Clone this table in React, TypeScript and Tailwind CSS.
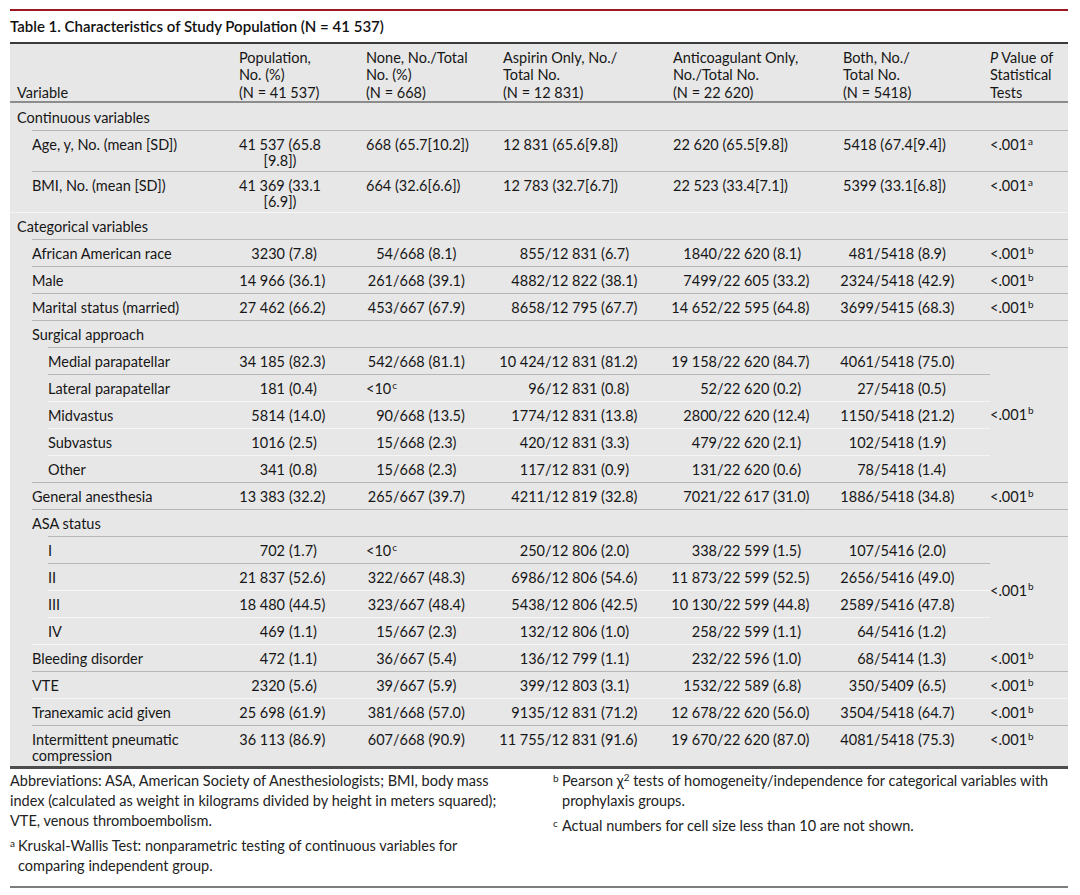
import React from 'react';

type Row = {
  label: string[];
  level: 0 | 1 | 2;
  line: 'n' | 'g' | 'w';
  vals?: string[];
  cont?: boolean;
  tall?: boolean;
  p?: 'a' | 'b' | 'skip' | 'span5' | 'span4';
};

const thin = (s: string) => s.replace(/(\d) (\d)/g, '$1\u00a0$2');

const rows: Row[] = [
  { label: ['Continuous variables'], level: 0, line: 'n' },
  { label: ['Age, y, No. (mean [SD])'], level: 1, line: 'g', tall: true, cont: true, p: 'a',
    vals: ['41 537 (65.8|[9.8])', '668 (65.7[10.2])', '12 831 (65.6[9.8])', '22 620 (65.5[9.8])', '5418 (67.4[9.4])'] },
  { label: ['BMI, No. (mean [SD])'], level: 1, line: 'g', tall: true, cont: true, p: 'a',
    vals: ['41 369 (33.1|[6.9])', '664 (32.6[6.6])', '12 783 (32.7[6.7])', '22 523 (33.4[7.1])', '5399 (33.1[6.8])'] },
  { label: ['Categorical variables'], level: 0, line: 'w' },
  { label: ['African American race'], level: 1, line: 'g', p: 'b',
    vals: ['3230 (7.8)', '54/668 (8.1)', '855/12 831 (6.7)', '1840/22 620 (8.1)', '481/5418 (8.9)'] },
  { label: ['Male'], level: 1, line: 'g', p: 'b',
    vals: ['14 966 (36.1)', '261/668 (39.1)', '4882/12 822 (38.1)', '7499/22 605 (33.2)', '2324/5418 (42.9)'] },
  { label: ['Marital status (married)'], level: 1, line: 'g', p: 'b',
    vals: ['27 462 (66.2)', '453/667 (67.9)', '8658/12 795 (67.7)', '14 652/22 595 (64.8)', '3699/5415 (68.3)'] },
  { label: ['Surgical approach'], level: 1, line: 'g' },
  { label: ['Medial parapatellar'], level: 2, line: 'g', p: 'span5',
    vals: ['34 185 (82.3)', '542/668 (81.1)', '10 424/12 831 (81.2)', '19 158/22 620 (84.7)', '4061/5418 (75.0)'] },
  { label: ['Lateral parapatellar'], level: 2, line: 'g', p: 'skip',
    vals: ['181 (0.4)', '<10', '96/12 831 (0.8)', '52/22 620 (0.2)', '27/5418 (0.5)'] },
  { label: ['Midvastus'], level: 2, line: 'w', p: 'skip',
    vals: ['5814 (14.0)', '90/668 (13.5)', '1774/12 831 (13.8)', '2800/22 620 (12.4)', '1150/5418 (21.2)'] },
  { label: ['Subvastus'], level: 2, line: 'w', p: 'skip',
    vals: ['1016 (2.5)', '15/668 (2.3)', '420/12 831 (3.3)', '479/22 620 (2.1)', '102/5418 (1.9)'] },
  { label: ['Other'], level: 2, line: 'w', p: 'skip',
    vals: ['341 (0.8)', '15/668 (2.3)', '117/12 831 (0.9)', '131/22 620 (0.6)', '78/5418 (1.4)'] },
  { label: ['General anesthesia'], level: 1, line: 'g', p: 'b',
    vals: ['13 383 (32.2)', '265/667 (39.7)', '4211/12 819 (32.8)', '7021/22 617 (31.0)', '1886/5418 (34.8)'] },
  { label: ['ASA status'], level: 1, line: 'g' },
  { label: ['I'], level: 2, line: 'g', p: 'span4',
    vals: ['702 (1.7)', '<10', '250/12 806 (2.0)', '338/22 599 (1.5)', '107/5416 (2.0)'] },
  { label: ['II'], level: 2, line: 'g', p: 'skip',
    vals: ['21 837 (52.6)', '322/667 (48.3)', '6986/12 806 (54.6)', '11 873/22 599 (52.5)', '2656/5416 (49.0)'] },
  { label: ['III'], level: 2, line: 'w', p: 'skip',
    vals: ['18 480 (44.5)', '323/667 (48.4)', '5438/12 806 (42.5)', '10 130/22 599 (44.8)', '2589/5416 (47.8)'] },
  { label: ['IV'], level: 2, line: 'w', p: 'skip',
    vals: ['469 (1.1)', '15/667 (2.3)', '132/12 806 (1.0)', '258/22 599 (1.1)', '64/5416 (1.2)'] },
  { label: ['Bleeding disorder'], level: 1, line: 'w', p: 'b',
    vals: ['472 (1.1)', '36/667 (5.4)', '136/12 799 (1.1)', '232/22 596 (1.0)', '68/5414 (1.3)'] },
  { label: ['VTE'], level: 1, line: 'g', p: 'b',
    vals: ['2320 (5.6)', '39/667 (5.9)', '399/12 803 (3.1)', '1532/22 589 (6.8)', '350/5409 (6.5)'] },
  { label: ['Tranexamic acid given'], level: 1, line: 'w', p: 'b',
    vals: ['25 698 (61.9)', '381/668 (57.0)', '9135/12 831 (71.2)', '12 678/22 620 (56.0)', '3504/5418 (64.7)'] },
  { label: ['Intermittent pneumatic', 'compression'], level: 1, line: 'g', tall: true, p: 'b',
    vals: ['36 113 (86.9)', '607/668 (90.9)', '11 755/12 831 (91.6)', '19 670/22 620 (87.0)', '4081/5418 (75.3)'] },
];

const lineCls = { n: 'border-transparent', g: 'border-[#b7b7b7]', w: 'border-[#f5f5f5]' };
const indentCls = ['pl-[7px]', 'ml-[22px]', 'ml-[38px]'];
const leftW = ['w-[46px]', 'w-[27px]', 'w-[42px]', 'w-[44px]', 'w-[31px]'];

const Sup = ({ c }: { c: string }) => <sup className="text-[10px] ml-[1px]">{c}</sup>;

const Value = ({ v, col, cont }: { v: string; col: number; cont?: boolean }) => {
  if (cont) {
    if (v.includes('|')) {
      const [a, b] = v.split('|');
      return <span className="inline-block text-center">{thin(a)}<br />{b}</span>;
    }
    return <span>{thin(v)}</span>;
  }
  if (v === '<10') return <span>&lt;10<Sup c="c" /></span>;
  let left: string, right: string;
  if (col === 0) {
    const i = v.indexOf(' (');
    left = v.slice(0, i);
    right = v.slice(i + 1);
  } else {
    const i = v.indexOf('/');
    left = v.slice(0, i);
    right = v.slice(i);
  }
  return (
    <span className="flex">
      <span className={`flex justify-end shrink-0 ${leftW[col]}`}>{thin(left)}</span>
      <span className={col === 0 ? 'ml-[4px]' : ''}>{thin(right)}</span>
    </span>
  );
};

const headers = [
  ['Variable'],
  ['Population,', 'No. (%)', '(N = 41 537)'],
  ['None, No./Total', 'No. (%)', '(N = 668)'],
  ['Aspirin Only, No./', 'Total No.', '(N = 12 831)'],
  ['Anticoagulant Only,', 'No./Total No.', '(N = 22 620)'],
  ['Both, No./', 'Total No.', '(N = 5418)'],
];

export default function App() {
  return (
    <div className="min-h-[895px] bg-white text-[#161616] font-['Lato',sans-serif]">
      <div className="ml-[10px] w-[1058px] pt-[9px]">
        <div className="h-[2px] bg-[#9b1722]" />
        <h1 className="pt-[5px] pb-[6px] text-[15px] leading-5 font-semibold text-[#111]">
          Table 1. Characteristics of Study Population (N = 41{'\u00a0'}537)
        </h1>

        <div className="grid grid-cols-[229px_127px_137px_170px_170px_147px_78px] bg-[#e7e7e7] border-t-2 border-b-[3px] border-t-[#3a3a3a] border-b-[#4d4d4d] text-[14.5px]">
          {headers.map((h, i) => (
            <div key={i} className={`h-[59px] flex flex-col justify-end border-b-2 border-[#8c8c8c] leading-[17.5px] ${i === 0 ? 'pl-[7px]' : ''}`}>
              {h.map((t, j) => <div key={j}>{thin(t)}</div>)}
            </div>
          ))}
          <div className="h-[59px] flex flex-col justify-end border-b-2 border-[#8c8c8c] leading-[17.5px]">
            <div><i>P</i> Value of</div>
            <div>Statistical</div>
            <div>Tests</div>
          </div>

          {rows.map((r, ri) => {
            const base = `${r.tall ? 'h-[41px]' : 'h-[27px]'} pt-[6px] leading-4 whitespace-nowrap border-t ${lineCls[r.line]}`;
            return (
              <React.Fragment key={ri}>
                <div className={`${base} ${indentCls[r.level]}`}>
                  {r.label.map((l, li) => <div key={li}>{l}</div>)}
                </div>
                {[0, 1, 2, 3, 4].map((c) => (
                  <div key={c} className={base}>
                    {r.vals && <Value v={r.vals[c]} col={c} cont={r.cont} />}
                  </div>
                ))}
                {r.p === 'a' || r.p === 'b' ? (
                  <div className={base}>&lt;.001<Sup c={r.p} /></div>
                ) : r.p === 'span5' ? (
                  <div className={`row-span-5 flex items-center border-t ${lineCls[r.line]}`}>&lt;.001<Sup c="b" /></div>
                ) : r.p === 'span4' ? (
                  <div className={`row-span-4 flex items-center border-t ${lineCls[r.line]}`}>&lt;.001<Sup c="b" /></div>
                ) : r.p === 'skip' ? null : (
                  <div className={base} />
                )}
              </React.Fragment>
            );
          })}
        </div>

        <div className="flex pt-[2px] pb-[10px] border-b-2 border-[#7d7d7d] text-[14.5px] leading-5 text-[#222]">
          <div className="w-[543px] shrink-0">
            <p>
              Abbreviations: ASA, American Society of Anesthesiologists; BMI, body mass<br />
              index (calculated as weight in kilograms divided by height in meters squared);<br />
              VTE, venous thromboembolism.
            </p>
            <div className="flex mt-[5px]">
              <span className="w-[8px] shrink-0 text-[10px] leading-[14px]">a</span>
              <p>
                Kruskal-Wallis Test: nonparametric testing of continuous variables for<br />
                comparing independent group.
              </p>
            </div>
          </div>
          <div>
            <div className="flex">
              <span className="w-[9px] shrink-0 text-[10px] leading-[14px]">b</span>
              <p>
                Pearson χ<sup className="text-[10px]">2</sup> tests of homogeneity/independence for categorical variables with<br />
                prophylaxis groups.
              </p>
            </div>
            <div className="flex mt-[5px]">
              <span className="w-[9px] shrink-0 text-[10px] leading-[14px]">c</span>
              <p>Actual numbers for cell size less than 10 are not shown.</p>
            </div>
          </div>
        </div>
      </div>
    </div>
  );
}
